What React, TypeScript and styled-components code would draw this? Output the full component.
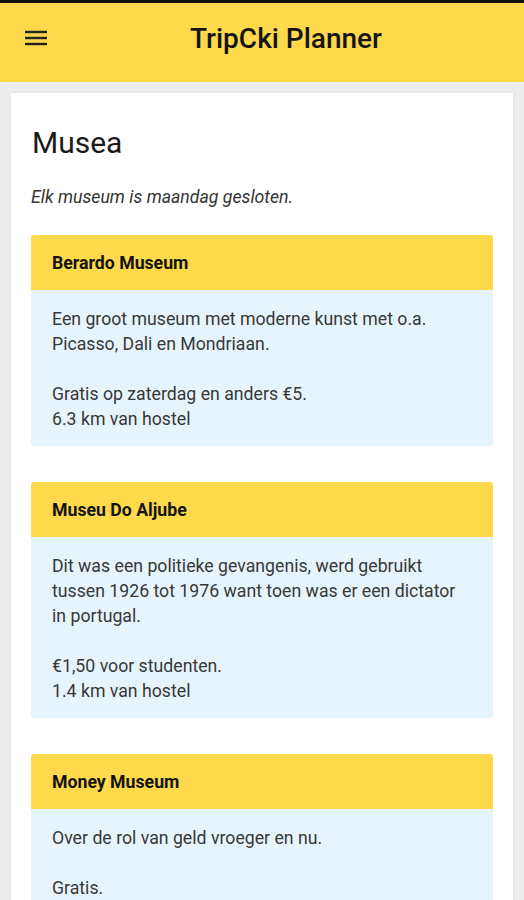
import React from 'react';
import styled, { createGlobalStyle } from 'styled-components';

interface Museum {
  name: string;
  paragraphs: string[][];
}

const museums: Museum[] = [
  {
    name: 'Berardo Museum',
    paragraphs: [
      ['Een groot museum met moderne kunst met o.a.', 'Picasso, Dali en Mondriaan.'],
      ['Gratis op zaterdag en anders €5.', '6.3 km van hostel'],
    ],
  },
  {
    name: 'Museu Do Aljube',
    paragraphs: [
      [
        'Dit was een politieke gevangenis, werd gebruikt',
        'tussen 1926 tot 1976 want toen was er een dictator',
        'in portugal.',
      ],
      ['€1,50 voor studenten.', '1.4 km van hostel'],
    ],
  },
  {
    name: 'Money Museum',
    paragraphs: [['Over de rol van geld vroeger en nu.'], ['Gratis.']],
  },
];

function MenuIcon() {
  return (
    <svg width="22" height="16" viewBox="0 0 22 16">
      <rect x="0" y="0.8" width="22" height="2.4" fill="#222" />
      <rect x="0" y="6.8" width="22" height="2.4" fill="#222" />
      <rect x="0" y="12.8" width="22" height="2.4" fill="#222" />
    </svg>
  );
}

function MuseumCard({ museum }: { museum: Museum }) {
  return (
    <Card>
      <CardHeader>{museum.name}</CardHeader>
      <CardBody>
        {museum.paragraphs.map((lines, i) => (
          <Paragraph key={i}>
            {lines.map((line, j) => (
              <React.Fragment key={j}>
                {j > 0 && <br />}
                {line}
              </React.Fragment>
            ))}
          </Paragraph>
        ))}
      </CardBody>
    </Card>
  );
}

function App() {
  return (
    <>
      <GlobalStyle />
      <StatusStrip />
      <AppBar>
        <MenuButton aria-label="menu">
          <MenuIcon />
        </MenuButton>
        <Title>TripCki Planner</Title>
      </AppBar>
      <Panel>
        <Heading>Musea</Heading>
        <Note>Elk museum is maandag gesloten.</Note>
        <CardList>
          {museums.map((m) => (
            <MuseumCard key={m.name} museum={m} />
          ))}
        </CardList>
      </Panel>
    </>
  );
}

export default App;

const GlobalStyle = createGlobalStyle`
  html, body {
    margin: 0;
    padding: 0;
    background: #ededed;
    font-family: Roboto, "Liberation Sans", sans-serif;
    overflow: hidden;
  }
`

const StatusStrip = styled.div`
  height: 3px;
  background: #111;
`

const AppBar = styled.header`
  height: 79px;
  background: #fdd94b;
  display: flex;
  align-items: center;
  padding-left: 25px;
`

const MenuButton = styled.div`
  display: flex;
  width: 22px;
  height: 16px;
  margin-top: -10px;
`

const Title = styled.h1`
  margin: -8px 0 0 143px;
  font-size: 28px;
  font-weight: 500;
  color: #151515;
`

const Panel = styled.main`
  margin: 11px 11px 0;
  background: #fff;
  padding: 20px 20px 40px;
  min-height: 900px;
  box-shadow: 0 0 3px rgba(0, 0, 0, 0.08);
`

const Heading = styled.h2`
  margin: 12px 0 0 1px;
  font-size: 30px;
  font-weight: 400;
  line-height: 36px;
  color: #1a1a1a;
`

const Note = styled.p`
  margin: 24px 0 0 0;
  font-size: 17.7px;
  font-style: italic;
  line-height: 24px;
  color: #333;
`

const CardList = styled.div`
  display: flex;
  flex-direction: column;
  gap: 36px;
  margin-top: 26px;
`

const Card = styled.section`
  border-radius: 3px;
  overflow: hidden;
`

const CardHeader = styled.div`
  height: 55px;
  display: flex;
  align-items: center;
  padding: 0 21px;
  background: #fdd94b;
  font-size: 17.7px;
  font-weight: 700;
  color: #141414;
`

const CardBody = styled.div`
  background: #e6f5fd;
  padding: 17px 21px 14px;
  font-size: 17.7px;
  line-height: 25px;
  color: #383838;
`

const Paragraph = styled.p`
  margin: 0;
  white-space: nowrap;

  & + & { margin-top: 25px; }
`
